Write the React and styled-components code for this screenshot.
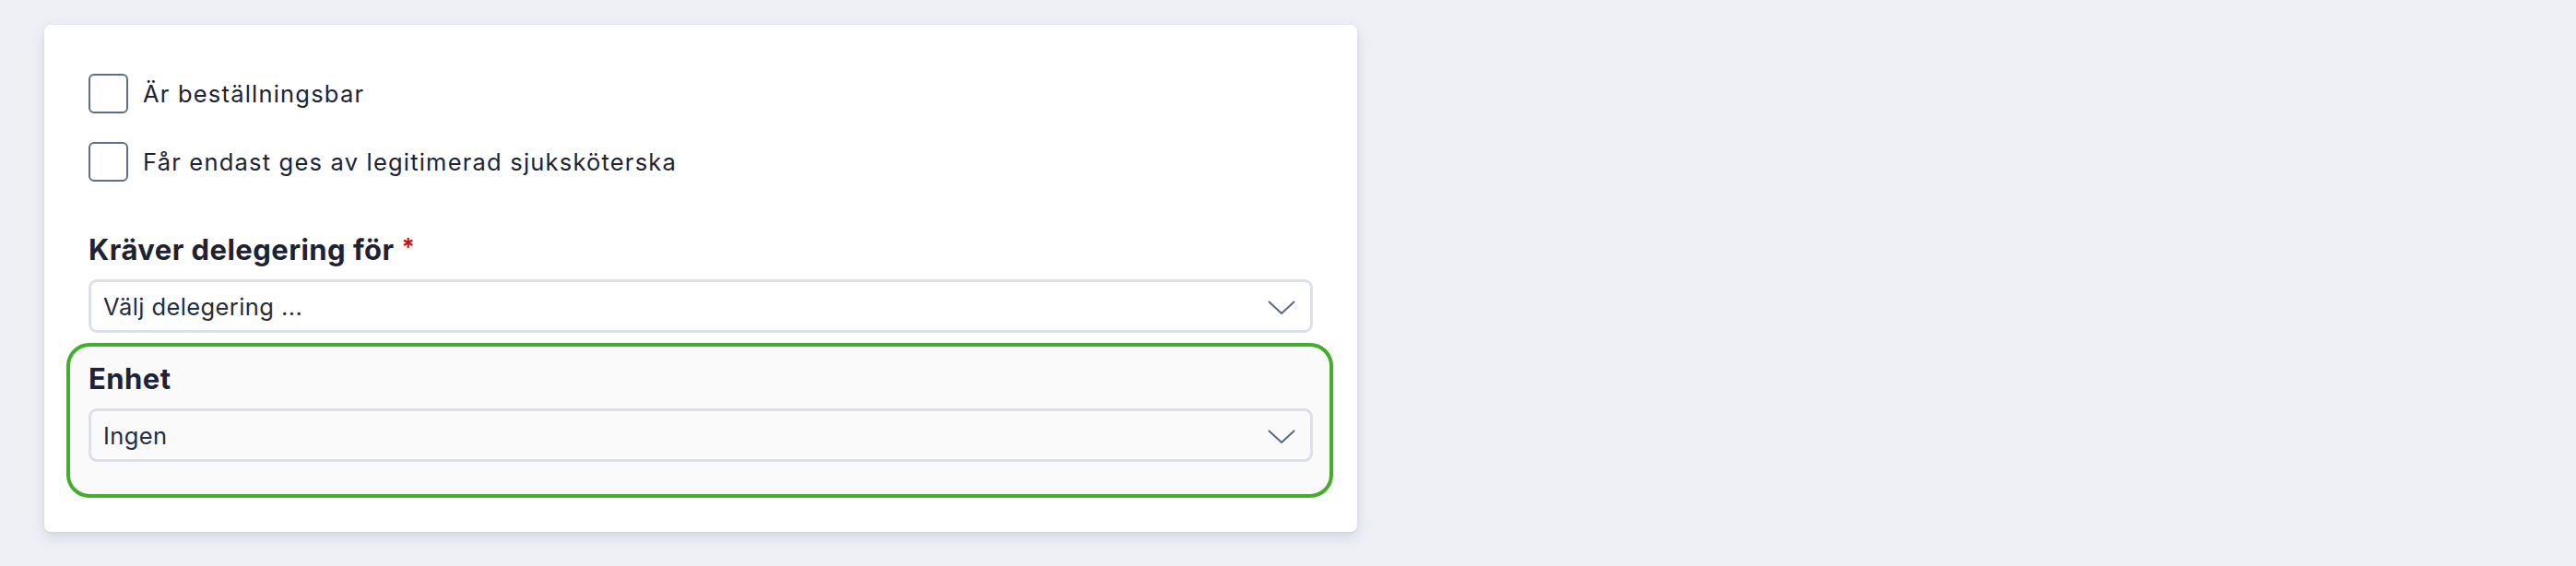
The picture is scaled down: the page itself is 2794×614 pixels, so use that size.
import React from "react";
import styled, { createGlobalStyle } from "styled-components";

const Global = createGlobalStyle`
  html, body { margin: 0; padding: 0; background: #eff0f5; }
  body { font-family: Inter, "Noto Sans", sans-serif; -webkit-font-smoothing: antialiased; }
  * { box-sizing: border-box; }
`;

const Page = styled.div`
  padding: 27px 0 0 48px;
  min-height: 614px;
`;

const Card = styled.div`
  width: 1424px;
  background: #ffffff;
  border-radius: 7px;
  box-shadow: 0 6px 14px rgba(180, 186, 206, 0.45), 0 1px 3px rgba(180, 186, 206, 0.3);
  padding: 53px 48px 37px 48px;
  display: flex;
  flex-direction: column;
`;

const CheckList = styled.div`
  display: flex;
  flex-direction: column;
  gap: 31px;
`;

const CheckRow = styled.label`
  display: flex;
  align-items: center;
  gap: 16px;
  height: 43px;
  font-size: 25.5px;
  letter-spacing: 1.2px;
  color: #1c2334;
`;

const Box = styled.span`
  width: 43px;
  height: 43px;
  border: 2.5px solid #5e6d8c;
  border-radius: 6px;
  background: #fff;
  flex: none;
`;

const Field = styled.div`
  display: flex;
  flex-direction: column;
  gap: 14px;
  margin-top: ${(p) => p.$mt || 0}px;
`;

const Label = styled.div`
  font-size: 31px;
  line-height: 36px;
  font-weight: 700;
  letter-spacing: 0.45px;
  color: #1c2334;
  display: flex;
  align-items: flex-start;
  gap: 8px;
`;

const Star = styled.span`
  color: #cc1111;
  font-size: 26px;
  line-height: 26px;
  margin-top: 2px;
`;

const Select = styled.div`
  height: 58px;
  border: 3px solid #dde0eb;
  border-radius: 9px;
  background: ${(p) => (p.$muted ? "#fafafa" : "#ffffff")};
  display: flex;
  align-items: center;
  justify-content: space-between;
  padding: 0 16px 0 13px;
  font-size: 25.5px;
  letter-spacing: 0.4px;
  color: #252d3d;
`;

const Highlight = styled.div`
  margin: 11px -22px 0 -24px;
  border: 4px solid #45ad2c;
  border-radius: 25px;
  background: #fafafa;
  padding: 17px 18px 35px 20px;
`;

const Chevron = () => (
  <svg width="30" height="16" viewBox="0 0 30 16" style={{ marginTop: 4 }}>
    <polyline points="1.5,1.5 15,14 28.5,1.5" fill="none" stroke="#5a6785" strokeWidth="2" strokeLinecap="round" strokeLinejoin="round" />
  </svg>
);

export default function App() {
  return (
    <>
      <Global />
      <Page>
        <Card>
          <CheckList>
            <CheckRow>
              <Box />
              Är beställningsbar
            </CheckRow>
            <CheckRow>
              <Box />
              Får endast ges av legitimerad sjuksköterska
            </CheckRow>
          </CheckList>
          <Field $mt={56}>
            <Label>
              Kräver delegering för <Star>*</Star>
            </Label>
            <Select>
              Välj delegering ...
              <Chevron />
            </Select>
          </Field>
          <Highlight>
            <Field>
              <Label>Enhet</Label>
              <Select $muted>
                Ingen
                <Chevron />
              </Select>
            </Field>
          </Highlight>
        </Card>
      </Page>
    </>
  );
}
